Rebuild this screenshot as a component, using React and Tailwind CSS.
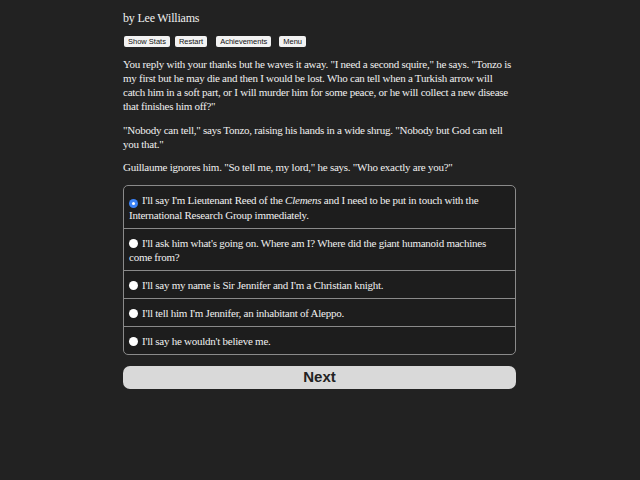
import React, { useState } from "react";

const serif = { fontFamily: '"Palatino Linotype", "Book Antiqua", Palatino, "Liberation Serif", serif' };
const sans = { fontFamily: '"Liberation Sans", Arial, sans-serif' };

const choices = [
  <>I'll say I'm Lieutenant Reed of the <i>Clemens</i> and I need to be put in touch with the International Research Group immediately.</>,
  <>I'll ask him what's going on. Where am I? Where did the giant humanoid machines come from?</>,
  <>I'll say my name is Sir Jennifer and I'm a Christian knight.</>,
  <>I'll tell him I'm Jennifer, an inhabitant of Aleppo.</>,
  <>I'll say he wouldn't believe me.</>,
];

function Radio({ checked }) {
  return checked ? (
    <span className="inline-flex w-[9px] h-[9px] rounded-full bg-[#3b82f6] items-center justify-center mr-[4px] align-[-1px]">
      <span className="w-[3px] h-[3px] rounded-full bg-white" />
    </span>
  ) : (
    <span className="inline-block w-[9px] h-[9px] rounded-full bg-white mr-[4px] align-[-1px]" />
  );
}

export default function App() {
  const [sel, setSel] = useState(0);
  return (
    <div className="w-[640px] h-[480px] bg-[#222222] text-[#f0f0f0]" style={serif}>
      <div className="w-[393px] ml-[123px] pt-[10px]">
        <div className="text-[12px] leading-[16px] tracking-[-0.2px]">by Lee Williams</div>
        <div className="flex mt-[10px] text-[7.5px] leading-[9px] text-[#111]" style={sans}>
          <span className="bg-[#f2f2f2] rounded-[2px] px-[4px] py-[1px] ml-[1px]">Show Stats</span>
          <span className="bg-[#f2f2f2] rounded-[2px] px-[4px] py-[1px] ml-[5px]">Restart</span>
          <span className="bg-[#f2f2f2] rounded-[2px] px-[4px] py-[1px] ml-[9px]">Achievements</span>
          <span className="bg-[#f2f2f2] rounded-[2px] px-[4px] py-[1px] ml-[8px]">Menu</span>
        </div>
        <div className="text-[11px] leading-[14px] tracking-[-0.25px] mt-[10px]">
          <p>You reply with your thanks but he waves it away. "I need a second squire," he says. "Tonzo is my first but he may die and then I would be lost. Who can tell when a Turkish arrow will catch him in a soft part, or I will murder him for some peace, or he will collect a new disease that finishes him off?"</p>
          <p className="mt-[10px]">"Nobody can tell," says Tonzo, raising his hands in a wide shrug. "Nobody but God can tell you that."</p>
          <p className="mt-[9px]">Guillaume ignores him. "So tell me, my lord," he says. "Who exactly are you?"</p>
        </div>
        <div className="mt-[11px] border border-[#8a8a8a] rounded-[5px] bg-[#1d1d1d] overflow-hidden">
          {choices.map((c, i) => (
            <div
              key={i}
              onClick={() => setSel(i)}
              className={`pl-[5px] pr-[4px] py-[6.5px] text-[11px] leading-[14px] tracking-[-0.25px] ${i > 0 ? "border-t border-[#8a8a8a]" : ""}`}
            >
              <Radio checked={sel === i} />
              {c}
            </div>
          ))}
        </div>
        <button
          className="mt-[11px] w-full h-[23px] rounded-[7px] bg-[#d9d9d9] text-[#222] text-[15px] font-bold"
          style={sans}
        >
          Next
        </button>
      </div>
    </div>
  );
}
